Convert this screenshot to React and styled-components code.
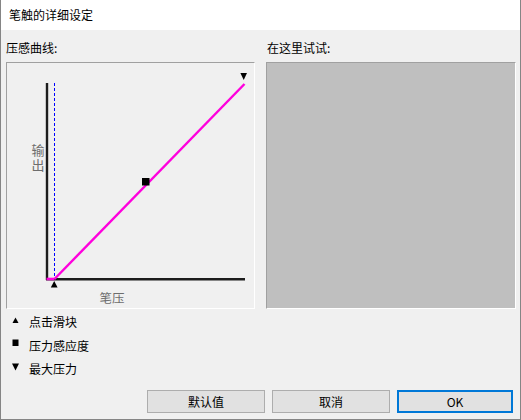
import React from "react";
import styled, { createGlobalStyle } from "styled-components";

const GlobalStyle = createGlobalStyle`
  html, body {
    margin: 0;
    padding: 0;
    background: #fff;
  }
  body {
    font-family: "Noto Sans CJK SC", "Noto Sans", sans-serif;
    font-size: 12px;
    color: #000;
  }
`;

const Window = styled.div`
  box-sizing: border-box;
  width: 521px;
  height: 420px;
  display: flex;
  flex-direction: column;
  border: 1px solid #858585;
  border-top: none;
  background: #f0f0f0;
`;

const TitleBar = styled.div`
  height: 30px;
  flex: none;
  display: flex;
  align-items: center;
  padding-left: 8px;
  background: #fff;
  font-size: 12px;
  line-height: 16px;
`;

const Body = styled.div`
  flex: 1;
  display: flex;
  flex-direction: column;
  padding: 0 4px 0 5px;
`;

const Columns = styled.div`
  display: flex;
  gap: 11px;
`;

const Column = styled.div`
  width: ${p => p.width}px;
  display: flex;
  flex-direction: column;
`;

const Label = styled.div`
  height: 32px;
  box-sizing: border-box;
  padding-top: 10px;
  line-height: 16px;
  padding-left: ${p => p.indent || 0}px;
`;

const Panel = styled.div`
  box-sizing: border-box;
  height: 247px;
  border-top: 1px solid #a0a0a0;
  border-left: 1px solid #a0a0a0;
  border-right: 1px solid #fff;
  border-bottom: 1px solid #fff;
  background: ${p => p.bg || "#f0f0f0"};
`;

const Chart = styled.svg`
  display: block;
  width: 100%;
  height: 100%;
`;

const AxisLabel = styled.text`
  font-family: "Noto Sans CJK SC", "Noto Sans", sans-serif;
  fill: #6d6d6d;
`;

const Legend = styled.div`
  display: flex;
  flex-direction: column;
  padding-left: 6px;
  margin-top: 1px;
`;

const LegendRow = styled.div`
  height: 23.5px;
  display: flex;
  align-items: center;
  gap: 10px;
`;

const Marker = styled.svg`
  width: 7px;
  height: 8px;
  margin-top: -4px;
  flex: none;
`;

const Footer = styled.div`
  display: flex;
  justify-content: flex-end;
  gap: 7px;
  margin-top: 9px;
  padding-right: 3px;
`;

const Button = styled.button`
  box-sizing: border-box;
  width: ${p => p.width}px;
  height: 23px;
  margin: 0;
  padding: 0;
  font-family: "Noto Sans CJK SC", "Noto Sans", sans-serif;
  font-size: 12px;
  color: #000;
  background: #e1e1e1;
  border: ${p => (p.primary ? "2px solid #0078d7" : "1px solid #adadad")};
  border-radius: 0;
`;

// chart coordinates are page pixels, shifted by the panel's inner top-left (7,63)
const ox = 7;
const oy = 63;

const CurveChart = () => (
  <Chart viewBox="0 0 247 245">
    <g transform={`translate(${-ox} ${-oy})`}>
      <line x1="47" y1="83" x2="47" y2="280" stroke="#1c1c1c" strokeWidth="2.4" />
      <line x1="46" y1="279.2" x2="245" y2="279.2" stroke="#1c1c1c" strokeWidth="2.4" />
      <line
        x1="54.5"
        y1="83"
        x2="54.5"
        y2="279"
        stroke="#0000ff"
        strokeWidth="1"
        strokeDasharray="3 2"
      />
      <line x1="46.5" y1="279" x2="54.5" y2="279" stroke="#ff00dd" strokeWidth="2.6" />
      <line x1="54.5" y1="279" x2="244.5" y2="84" stroke="#ff00dd" strokeWidth="2.4" />
      <rect x="142" y="178" width="7.5" height="7.5" fill="#000" />
      <polygon points="54.2,281 50.8,287.5 57.6,287.5" fill="#000" />
      <polygon points="240.4,73 247,73 243.7,80" fill="#000" />
      <AxisLabel
        x="38"
        y="144"
        fontSize="13"
        letterSpacing="2"
        style={{ writingMode: "vertical-rl" }}
      >
        输出
      </AxisLabel>
      <AxisLabel x="99.5" y="302.5" fontSize="12.5">
        笔压
      </AxisLabel>
    </g>
  </Chart>
);

const legend = [
  { shape: "up", text: "点击滑块" },
  { shape: "square", text: "压力感应度" },
  { shape: "down", text: "最大压力" },
];

const MarkerIcon = ({ shape }) => (
  <Marker viewBox="0 0 7 8">
    {shape === "up" && <polygon points="3.5,1.5 0.5,7 6.5,7" fill="#000" />}
    {shape === "square" && <rect x="0.5" y="0.5" width="6" height="6.5" fill="#000" />}
    {shape === "down" && <polygon points="0,0.5 7,0.5 3.5,7.5" fill="#000" />}
  </Marker>
);

export default function App() {
  return (
    <>
      <GlobalStyle />
      <Window>
        <TitleBar>笔触的详细设定</TitleBar>
        <Body>
          <Columns>
            <Column width={249}>
              <Label>压感曲线:</Label>
              <Panel>
                <CurveChart />
              </Panel>
            </Column>
            <Column width={250}>
              <Label indent={1}>在这里试试:</Label>
              <Panel bg="#bfbfbf" />
            </Column>
          </Columns>
          <Legend>
            {legend.map(item => (
              <LegendRow key={item.text}>
                <MarkerIcon shape={item.shape} />
                <span>{item.text}</span>
              </LegendRow>
            ))}
          </Legend>
          <Footer>
            <Button width={118}>默认值</Button>
            <Button width={118}>取消</Button>
            <Button width={116} primary>
              OK
            </Button>
          </Footer>
        </Body>
      </Window>
    </>
  );
}
